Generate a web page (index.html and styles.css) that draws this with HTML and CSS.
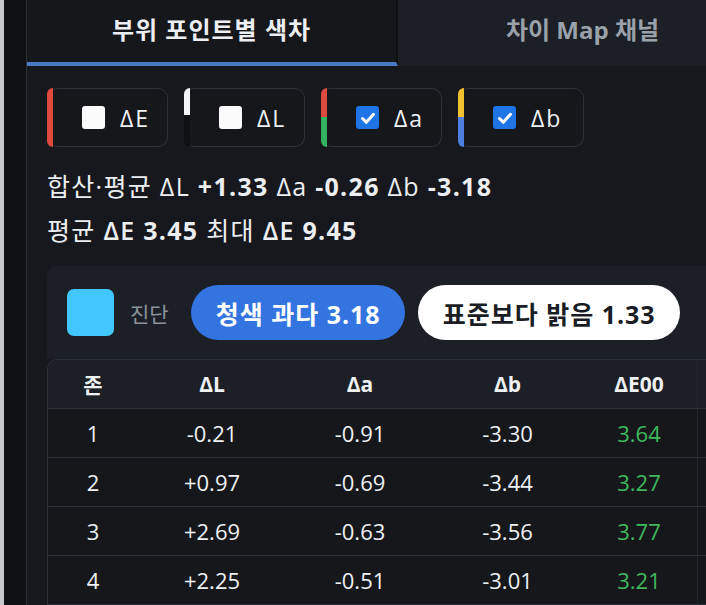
FILE: index.html
```html
<!DOCTYPE html>
<html lang="ko">
<head>
<meta charset="utf-8">
<title>부위 포인트별 색차</title>
<link rel="stylesheet" href="styles.css">
</head>
<body>
<div class="shell">
  <div class="edge"></div>
  <div class="rail"></div>
  <main class="panel">
    <nav class="tabs">
      <div class="tab tab-active">부위 포인트별 색차</div>
      <div class="tab">차이 Map 채널</div>
    </nav>

    <section class="content">
      <div class="chips">
        <label class="chip">
          <span class="stripe stripe-e"></span>
          <span class="box"></span>
          <span class="chip-label">ΔE</span>
        </label>
        <label class="chip">
          <span class="stripe stripe-l"></span>
          <span class="box"></span>
          <span class="chip-label">ΔL</span>
        </label>
        <label class="chip">
          <span class="stripe stripe-a"></span>
          <span class="box box-on"><svg viewBox="0 0 22 22" width="22" height="22"><path d="M5.5 11.5l3.8 3.8 7.2-8" fill="none" stroke="#fff" stroke-width="3" stroke-linecap="round" stroke-linejoin="round"/></svg></span>
          <span class="chip-label">Δa</span>
        </label>
        <label class="chip chip-wide">
          <span class="stripe stripe-b"></span>
          <span class="box box-on"><svg viewBox="0 0 22 22" width="22" height="22"><path d="M5.5 11.5l3.8 3.8 7.2-8" fill="none" stroke="#fff" stroke-width="3" stroke-linecap="round" stroke-linejoin="round"/></svg></span>
          <span class="chip-label">Δb</span>
        </label>
      </div>

      <div class="summary">
        <p>합산·평균 ΔL <b>+1.33</b> Δa <b>-0.26</b> Δb <b>-3.18</b></p>
        <p>평균 <b class="semi">ΔE</b> <b>3.45</b> 최대 <b class="semi">ΔE</b> <b>9.45</b></p>
      </div>

      <div class="diag">
        <span class="swatch"></span>
        <span class="diag-label">진단</span>
        <span class="pill pill-blue">청색 과다 3.18</span>
        <span class="pill pill-white">표준보다 밝음 1.33</span>
      </div>

      <div class="table">
        <div class="row head">
          <span>존</span><span>ΔL</span><span>Δa</span><span>Δb</span><span>ΔE00</span><span class="rest"></span>
        </div>
        <div class="row">
          <span>1</span><span>-0.21</span><span>-0.91</span><span>-3.30</span><span class="good">3.64</span><span class="rest"></span>
        </div>
        <div class="row">
          <span>2</span><span>+0.97</span><span>-0.69</span><span>-3.44</span><span class="good">3.27</span><span class="rest"></span>
        </div>
        <div class="row">
          <span>3</span><span>+2.69</span><span>-0.63</span><span>-3.56</span><span class="good">3.77</span><span class="rest"></span>
        </div>
        <div class="row">
          <span>4</span><span>+2.25</span><span>-0.51</span><span>-3.01</span><span class="good">3.21</span><span class="rest"></span>
        </div>
      </div>
    </section>
  </main>
</div>
</body>
</html>
```
FILE: styles.css
```css
html, body {
  margin: 0;
  padding: 0;
}

body {
  width: 706px;
  height: 605px;
  overflow: hidden;
  background: #16181d;
  color: #e8eaed;
  font-family: "Open Sans", "Noto Sans CJK KR", sans-serif;
}

.shell {
  display: flex;
  height: 605px;
}

.edge {
  flex: 0 0 4px;
  background: #c6cacd;
}

.rail {
  flex: 0 0 22px;
  background: #101113;
  border-right: 1px solid #2b2e34;
}

.panel {
  flex: 0 0 740px;
  background: #16181d;
}

/* tab strip */
.tabs {
  display: flex;
}

.tab {
  flex: 1 1 0;
  height: 56px;
  padding-bottom: 6px;
  display: flex;
  align-items: center;
  justify-content: center;
  font-size: 24px;
  font-weight: 700;
  color: #9aa1a9;
  background: #1c1f25;
  border-bottom: 4px solid transparent;
}

.tab-active {
  color: #eceef1;
  background: #15171b;
  letter-spacing: 1px;
  border-right: 2px solid #0f1013;
  border-bottom-color: #4b78c6;
}

.content {
  padding: 22px 20px 0 20px;
}

/* channel toggles */
.chips {
  display: flex;
  gap: 16px;
}

.chip {
  display: flex;
  align-items: center;
  box-sizing: border-box;
  min-width: 121px;
  height: 59px;
  padding-right: 16px;
  border: 1px solid #2d3139;
  border-left: none;
  border-radius: 10px;
  background: #15171b;
}

.chip-wide {
  min-width: 126px;
}

.stripe {
  align-self: stretch;
  width: 6px;
  margin: -1px 29px -1px 0;
  border-radius: 10px 0 0 10px;
}

.stripe-e { background: #df4a3f; }
.stripe-l { background: linear-gradient(#f4f5f7 0 46%, #0f1012 46% 100%); }
.stripe-a { background: linear-gradient(#dc4a40 0 50%, #34b35e 50% 100%); }
.stripe-b { background: linear-gradient(#f2c12f 0 50%, #4c7fe0 50% 100%); }

.box {
  width: 23px;
  height: 23px;
  border-radius: 3px;
  background: #fbfbfc;
  margin-right: 15px;
  display: flex;
  align-items: center;
  justify-content: center;
}

.box-on {
  background: #1f74e6;
}

.chip-label {
  font-size: 23px;
  letter-spacing: 2px;
  color: #eef0f3;
}

/* averages */
.summary {
  margin-top: 17px;
}

.summary p {
  margin: 0;
  font-size: 25px;
  line-height: 44px;
  letter-spacing: 1.3px;
  color: #eceef1;
}

.summary b {
  font-weight: 700;
}

.summary .semi {
  font-weight: 600;
}

/* diagnosis bar */
.diag {
  margin-top: 14px;
  display: flex;
  align-items: center;
  padding: 19px 0 19px 20px;
  background: #1c1f25;
  border-radius: 10px 0 0 0;
}

.swatch {
  width: 47px;
  height: 47px;
  border-radius: 7px;
  background: #41c7fd;
  margin-right: 16px;
}

.diag-label {
  font-size: 21px;
  color: #8c939c;
  margin-right: 22px;
}

.pill {
  height: 55px;
  display: flex;
  align-items: center;
  padding: 0 24px 0 25px;
  border-radius: 28px;
  font-size: 25px;
  font-weight: 700;
  letter-spacing: 1px;
  box-sizing: border-box;
}

.pill-blue {
  background: #3374e0;
  color: #ffffff;
  margin-right: 13px;
}

.pill-white {
  background: #ffffff;
  color: #1a1d23;
}

/* zone table */
.table {
  border: 1px solid #2c3038;
  border-right: none;
  border-radius: 10px 0 0 0;
  overflow: hidden;
}

.row {
  display: grid;
  grid-template-columns: 90px 148px 148px 147px 116px 1fr;
  height: 48px;
  align-items: center;
  background: #15171b;
  border-top: 1px solid #2c3038;
  font-size: 22px;
  color: #eef0f3;
}

.row span {
  text-align: center;
}

.row .rest {
  align-self: stretch;
  border-left: 1px solid #23262d;
}

.head {
  height: 48px;
  border-top: none;
  background: #1c1f25;
  font-size: 21px;
  font-weight: 700;
}

.good {
  color: #3fb75e;
}
```
